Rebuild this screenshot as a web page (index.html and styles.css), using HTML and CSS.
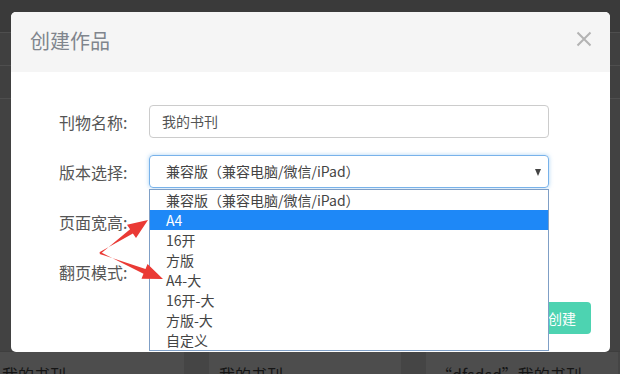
FILE: index.html
```html
<!DOCTYPE html>
<html lang="zh-CN">
<head>
<meta charset="utf-8">
<title>创建作品</title>
<link rel="stylesheet" href="styles.css">
</head>
<body>
<div class="page">
  <div class="bar bar-top"></div>
  <div class="bar"></div>
  <div class="bar"></div>
  <div class="spacer"></div>
  <div class="cards">
    <div class="card">我的书刊</div>
    <div class="card">我的书刊</div>
    <div class="card">“dfsdsd”我的书刊</div>
  </div>
</div>

<div class="modal">
  <div class="modal-header">
    <div class="modal-title">创建作品</div>
    <svg class="close" width="16" height="16" viewBox="0 0 16 16"><path d="M1.5 1.5 L14.5 14.5 M14.5 1.5 L1.5 14.5" stroke="#b3b3b3" stroke-width="2" fill="none"/></svg>
  </div>
  <div class="modal-body">
    <div class="row">
      <div class="label">刊物名称:</div>
      <div class="field input">我的书刊</div>
    </div>
    <div class="row">
      <div class="label">版本选择:</div>
      <div class="field select">
        <span>兼容版（兼容电脑/微信/iPad）</span>
        <span class="caret"></span>
        <ul class="options">
          <li>兼容版（兼容电脑/微信/iPad）</li>
          <li class="active">A4</li>
          <li>16开</li>
          <li>方版</li>
          <li>A4-大</li>
          <li>16开-大</li>
          <li>方版-大</li>
          <li>自定义</li>
        </ul>
      </div>
    </div>
    <div class="row">
      <div class="label">页面宽高:</div>
    </div>
    <div class="row">
      <div class="label">翻页模式:</div>
    </div>
  </div>
  <div class="modal-footer">
    <div class="btn">创建</div>
  </div>
</div>

<svg class="arrows" width="620" height="374" viewBox="0 0 620 374">
  <polygon points="99.4,252.2 132.9,233.4 136,237.9 148,220 127,224.7 130.1,229.2 100.6,253.8" fill="#ea3a35"/>
  <polygon points="100.4,252.1 143.5,273.7 141.5,278.8 163,279 147.5,264 145.5,269.1 99.6,253.9" fill="#ea3a35"/>
</svg>
</body>
</html>
```
FILE: styles.css
```css
html, body {
  margin: 0;
  padding: 0;
  width: 620px;
  height: 374px;
  overflow: hidden;
  font-family: "Noto Sans CJK SC", "Noto Sans", sans-serif;
}

.page {
  height: 374px;
  display: flex;
  flex-direction: column;
  background: #424242;
}

.bar {
  height: 32px;
  border-bottom: 1px solid #4e4e4e;
  background: #404040;
}

.bar-top {
  background: #3a3a3a;
}

.spacer {
  flex: 1;
}

.cards {
  display: flex;
  gap: 25px;
  margin-left: -8px;
  height: 22px;
  background: #454545;
  border-top: 1px solid #3e3e3e;
}

.card {
  width: 182px;
  padding: 13px 0 0 10px;
  background: #4d4d4d;
  font-size: 16px;
  line-height: 18px;
  color: #151515;
  white-space: nowrap;
  overflow: hidden;
}

.modal {
  position: absolute;
  left: 11px;
  top: 12px;
  width: 599px;
  height: 340px;
  background: #fff;
  border-radius: 5px;
  overflow: visible;
  display: flex;
  flex-direction: column;
}

.modal-header {
  height: 60px;
  background: #f5f5f5;
  border-radius: 5px 5px 0 0;
  display: flex;
  align-items: center;
  justify-content: space-between;
  padding: 0 18px 0 19px;
}

.modal-title {
  font-size: 20px;
  line-height: 24px;
  color: #80858d;
  margin-top: -2px;
}

.close {
  display: block;
  margin-top: -6px;
}

.modal-body {
  padding: 33px 61px 0 48px;
  display: flex;
  flex-direction: column;
  gap: 17px;
}

.row {
  display: flex;
  align-items: center;
  height: 33px;
}

.label {
  width: 90px;
  font-size: 16px;
  line-height: 20px;
  color: #555;
}

.field {
  flex: 1;
  height: 33px;
  box-sizing: border-box;
  border: 1px solid #ccc;
  border-radius: 4px;
  font-size: 14px;
  line-height: 31px;
  color: #555;
  padding-left: 12px;
  position: relative;
}

.select {
  border-color: #78b2ea;
  box-shadow: 0 0 4px rgba(102, 175, 233, 0.55);
  padding-left: 16px;
  color: #444;
  display: flex;
  align-items: center;
  justify-content: space-between;
  padding-right: 7px;
}

.caret {
  width: 0;
  height: 0;
  border-left: 3.5px solid transparent;
  border-right: 3.5px solid transparent;
  border-top: 7px solid #444;
  margin-top: 1px;
}

.options {
  position: absolute;
  left: -1px;
  right: -1px;
  top: 33px;
  margin: 0;
  padding: 0;
  list-style: none;
  background: #fff;
  border: 1px solid #7f9fc6;
  z-index: 5;
}

.options li {
  height: 20px;
  line-height: 20px;
  padding-left: 16px;
  font-size: 14px;
  color: #444;
}

.options li.active {
  background: #1e88f7;
  color: #fff;
}

.modal-footer {
  display: flex;
  justify-content: flex-end;
  padding: 14px 19px 0 0;
}

.btn {
  width: 58px;
  height: 32px;
  border-radius: 4px;
  background: #4dd3b1;
  color: #fff;
  font-size: 14px;
  line-height: 32px;
  text-align: center;
}

.arrows {
  position: absolute;
  left: 0;
  top: 0;
  pointer-events: none;
  z-index: 10;
}
```
